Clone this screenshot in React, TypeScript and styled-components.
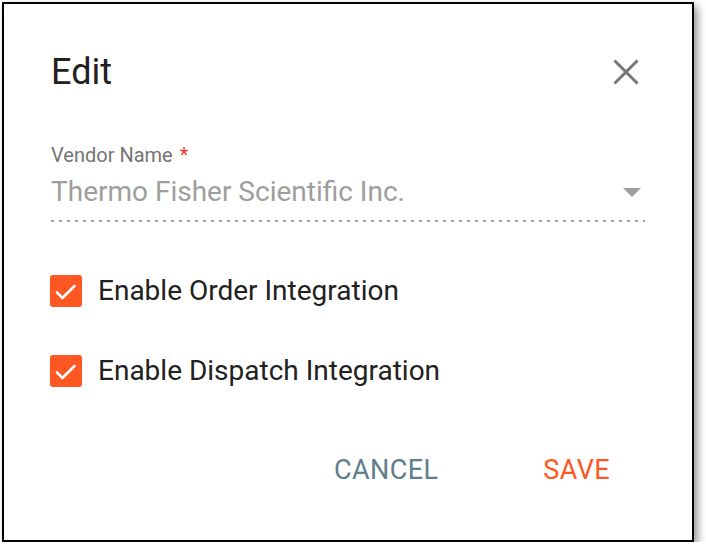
import React from "react";
import styled, { createGlobalStyle } from "styled-components";

const GlobalStyle = createGlobalStyle`
  html, body {
    margin: 0;
    padding: 0;
    background: #fff;
  }
  body {
    font-family: Roboto, "Liberation Sans", sans-serif;
    -webkit-font-smoothing: antialiased;
  }
`;

const Page = styled.div`
  padding: 2px 0 0 2px;
`;

const DialogView = styled.div`
  box-sizing: border-box;
  width: 692px;
  height: 540px;
  border: 2px solid #000;
  background: #fff;
  box-shadow: 4px 4px 8px rgba(0, 0, 0, 0.4);
  display: flex;
  flex-direction: column;
  padding: 48px 47px 0 47px;
`;

// header
const Header = styled.div`
  display: flex;
  align-items: center;
  justify-content: space-between;
  padding-right: 6px;
`;
const Title = styled.h2`
  margin: 0;
  font-size: 36px;
  line-height: 40px;
  font-weight: 400;
  color: #212121;
`;
const CloseButton = styled.button`
  border: 0;
  background: none;
  padding: 0;
  width: 26px;
  height: 26px;
  display: flex;
  cursor: pointer;
`;

// vendor field
const Field = styled.div`
  margin-top: 51px;
  display: flex;
  flex-direction: column;
`;
const Label = styled.label`
  font-size: 20px;
  line-height: 24px;
  color: #757575;
`;
const Required = styled.span`
  color: #e53935;
  margin-left: 7px;
`;
const SelectRow = styled.div`
  margin-top: 7px;
  display: flex;
  align-items: center;
  justify-content: space-between;
  padding-bottom: 12px;
  background-image: linear-gradient(to right, #a0a0a0 3px, transparent 3px);
  background-size: 8px 2px;
  background-repeat: repeat-x;
  background-position: left bottom;
`;
const SelectValue = styled.span`
  font-size: 28px;
  line-height: 36px;
  color: #9e9e9e;
`;
const Arrow = styled.span`
  width: 0;
  height: 0;
  margin-right: 4px;
  border-left: 9px solid transparent;
  border-right: 9px solid transparent;
  border-top: 9px solid #9e9e9e;
`;

// checkboxes
const Options = styled.div`
  margin-top: 52px;
  display: flex;
  flex-direction: column;
  gap: 46px;
`;
const CheckRow = styled.label`
  display: flex;
  align-items: center;
  gap: 16px;
  font-size: 28px;
  line-height: 34px;
  color: #212121;
`;
const Box = styled.span`
  width: 32px;
  height: 32px;
  border-radius: 3px;
  background: #ff5722;
  display: flex;
  margin-left: -1px;
`;

// actions
const Actions = styled.div`
  margin-top: 64px;
  display: flex;
  justify-content: flex-end;
  gap: 105px;
  padding-right: 35px;
`;
const ActionButton = styled.button<{ $tone: string }>`
  border: 0;
  background: none;
  padding: 0;
  font-family: Roboto, "Liberation Sans", sans-serif;
  font-size: 27px;
  line-height: 36px;
  font-weight: 400;
  letter-spacing: 0.4px;
  color: ${(p) => p.$tone};
  cursor: pointer;
`;

const Check = () => (
  <Box>
    <svg width="32" height="32" viewBox="0 0 32 32" fill="none">
      <path d="M7 17.5 L12.5 23 L24.5 11" stroke="#fff" strokeWidth="2.6" strokeLinecap="round" strokeLinejoin="round" />
    </svg>
  </Box>
);

const App = () => {
  return (
    <Page>
      <GlobalStyle />
      <DialogView>
        <Header>
          <Title>Edit</Title>
          <CloseButton aria-label="close">
            <svg width="26" height="26" viewBox="0 0 26 26">
              <path d="M1.5 1.5 L24.5 24.5 M24.5 1.5 L1.5 24.5" stroke="#757575" strokeWidth="3" />
            </svg>
          </CloseButton>
        </Header>
        <Field>
          <Label>
            Vendor Name<Required>*</Required>
          </Label>
          <SelectRow>
            <SelectValue>Thermo Fisher Scientific Inc.</SelectValue>
            <Arrow />
          </SelectRow>
        </Field>
        <Options>
          <CheckRow>
            <Check />
            Enable Order Integration
          </CheckRow>
          <CheckRow>
            <Check />
            Enable Dispatch Integration
          </CheckRow>
        </Options>
        <Actions>
          <ActionButton $tone="#607d8b">CANCEL</ActionButton>
          <ActionButton $tone="#ff5722">SAVE</ActionButton>
        </Actions>
      </DialogView>
    </Page>
  );
};

export default App;
